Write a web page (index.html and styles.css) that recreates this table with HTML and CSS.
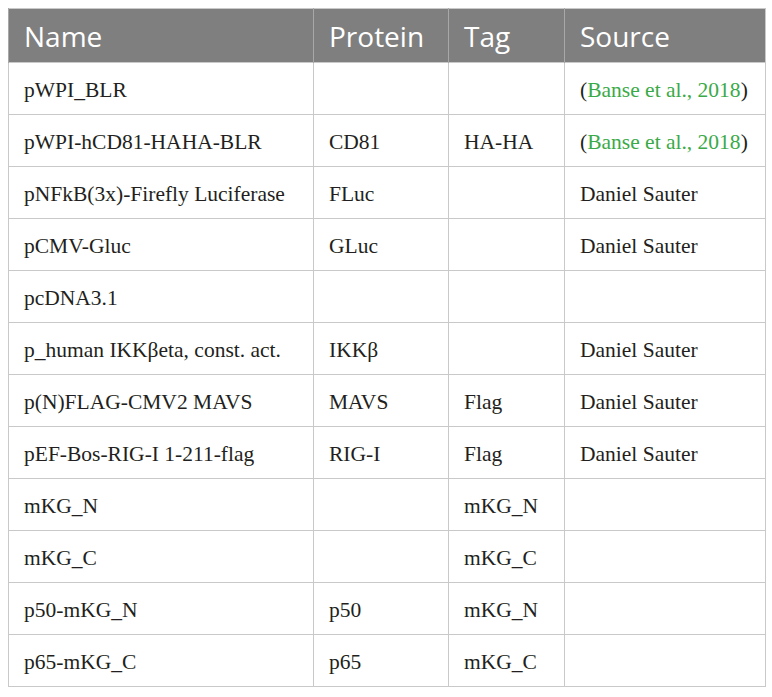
FILE: index.html
```html
<!DOCTYPE html>
<html>
<head>
<meta charset="utf-8">
<link rel="stylesheet" href="styles.css">
</head>
<body>
<table class="tbl">
  <colgroup>
    <col class="c1"><col class="c2"><col class="c3"><col class="c4">
  </colgroup>
  <thead>
    <tr><th>Name</th><th>Protein</th><th>Tag</th><th>Source</th></tr>
  </thead>
  <tbody>
    <tr><td>pWPI_BLR</td><td></td><td></td><td>(<span class="ref">Banse et al., 2018</span>)</td></tr>
    <tr><td>pWPI-hCD81-HAHA-BLR</td><td>CD81</td><td>HA-HA</td><td>(<span class="ref">Banse et al., 2018</span>)</td></tr>
    <tr><td>pNFkB(3x)-Firefly Luciferase</td><td>FLuc</td><td></td><td>Daniel Sauter</td></tr>
    <tr><td>pCMV-Gluc</td><td>GLuc</td><td></td><td>Daniel Sauter</td></tr>
    <tr><td>pcDNA3.1</td><td></td><td></td><td></td></tr>
    <tr><td>p_human IKKβeta, const. act.</td><td>IKKβ</td><td></td><td>Daniel Sauter</td></tr>
    <tr><td>p(N)FLAG-CMV2 MAVS</td><td>MAVS</td><td>Flag</td><td>Daniel Sauter</td></tr>
    <tr><td>pEF-Bos-RIG-I 1-211-flag</td><td>RIG-I</td><td>Flag</td><td>Daniel Sauter</td></tr>
    <tr><td>mKG_N</td><td></td><td>mKG_N</td><td></td></tr>
    <tr><td>mKG_C</td><td></td><td>mKG_C</td><td></td></tr>
    <tr><td>p50-mKG_N</td><td>p50</td><td>mKG_N</td><td></td></tr>
    <tr><td>p65-mKG_C</td><td>p65</td><td>mKG_C</td><td></td></tr>
  </tbody>
</table>
</body>
</html>
```
FILE: styles.css
```css
html, body {
  margin: 0;
  padding: 0;
  background: #ffffff;
}
body {
  padding: 8px;
}
.tbl {
  border-collapse: collapse;
  table-layout: fixed;
  width: 757px;
  border: 1px solid #c9c9c9;
}
.c1 { width: 305px; }
.c2 { width: 135px; }
.c3 { width: 116px; }
.c4 { width: 201px; }
.tbl th {
  background: #7f7f7f;
  color: #ffffff;
  font-family: "Open Sans", "Noto Sans", sans-serif;
  font-weight: 400;
  font-size: 28px;
  text-align: left;
  height: 54px;
  padding: 0 0 0 15px;
  border-left: 1px solid #a8a8a8;
  box-sizing: border-box;
}
.tbl td {
  font-family: "Liberation Serif", "Times New Roman", serif;
  font-size: 21.5px;
  color: #231f20;
  height: 47px;
  padding: 4px 0 0 15px;
  border: 1px solid #c9c9c9;
  white-space: nowrap;
}
.ref {
  color: #3aaa48;
}
```
